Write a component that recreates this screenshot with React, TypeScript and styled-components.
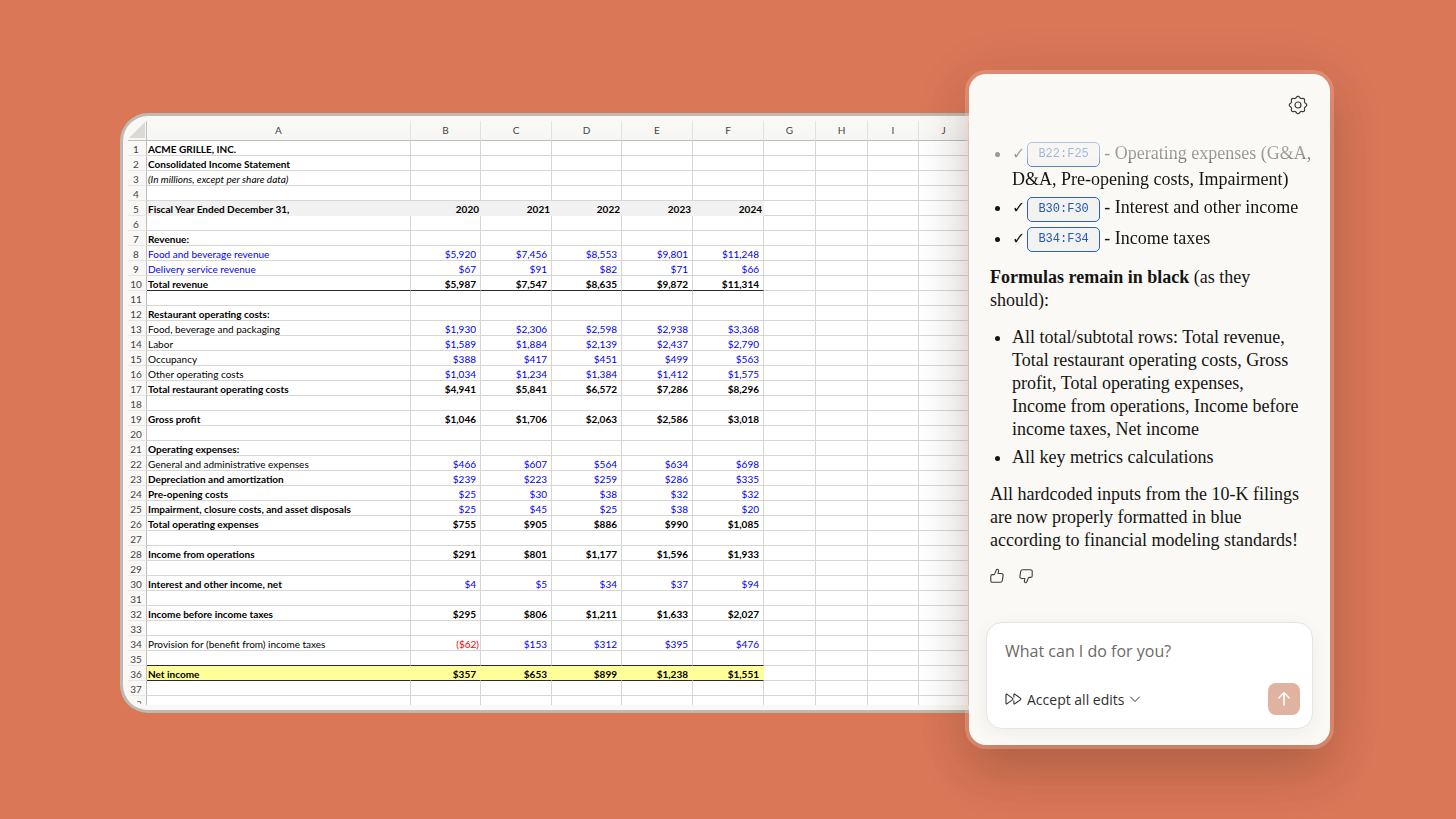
import React from "react";
import styled, { createGlobalStyle, css } from "styled-components";

const GlobalStyle = createGlobalStyle`
  * { box-sizing: border-box; }
  body { margin: 0; background: #d97757; }
  button, input, select { font: inherit; color: inherit; }
`;

/* ---------- Spreadsheet ---------- */

const Stage = styled.main`
  display: grid;
  grid-template-columns: minmax(0, 1fr) 361px;
  align-items: center;
  min-height: 100vh;
  padding: 0 126px 0 120px;
`;

const Sheet = styled.section`
  margin-top: 7px;
  padding: 5px 0 5px 5px;
  border: 3px solid #bcbbb3;
  border-right: 0;
  border-radius: 28px 0 0 28px;
  background: #f9f8f4;
`;

const GridClip = styled.div`
  overflow: hidden;
  height: 584px;
  border-radius: 20px 0 0 20px;
`;

const Grid = styled.table`
  width: 100%;
  table-layout: fixed;
  border-collapse: separate;
  border-spacing: 0;
  font: 10px/12px Lato, "Liberation Sans", sans-serif;
  color: #000;
`;

const Col = styled.col<{ $w?: number }>`
  ${(p) => p.$w && `width: ${p.$w}px;`}
`;

const ColumnHead = styled.th`
  height: 20px;
  padding: 0 0 2px;
  border-right: 1px solid #e2e2df;
  border-bottom: 1px solid #bdbdbb;
  background: linear-gradient(#faf9f6, #f6f6f4);
  color: #444;
  font-weight: 400;
`;

const Corner = styled.td`
  padding: 0;
  border-right: 1px solid #bdbdbb;
  border-bottom: 1px solid #bdbdbb;
`;

const CornerMark = styled.svg`
  display: block;
  width: 18px;
  height: 19px;
`;

const RowHead = styled.th`
  height: 15px;
  padding: 2px 2px 0 0;
  border-right: 1px solid #bdbdbb;
  border-bottom: 1px solid #e6e6e3;
  background: #f9f8f5;
  color: #444;
  font-weight: 400;
  text-align: center;
`;

type Tone = "black" | "blue" | "red";
const tones: Record<Tone, string> = { black: "#000", blue: "#0000f5", red: "#f50000" };

const Cell = styled.td<{
  $tone?: Tone;
  $bold?: boolean;
  $italic?: boolean;
  $num?: boolean;
  $flush?: boolean;
  $fill?: string;
  $rule?: boolean;
}>`
  height: 15px;
  padding: 2px ${(p) => (p.$num && !p.$flush ? 4 : 1)}px 0;
  border-right: 1px solid #d6d6d6;
  border-bottom: 1px solid #d6d6d6;
  background: #fff;
  color: ${(p) => tones[p.$tone ?? "black"]};
  font-weight: ${(p) => (p.$bold ? 700 : 400)};
  font-style: ${(p) => (p.$italic ? "italic" : "normal")};
  text-align: ${(p) => (p.$num ? "right" : "left")};
  white-space: nowrap;
  ${(p) =>
    p.$fill &&
    css`
      background: ${p.$fill};
      border-color: ${p.$fill};
    `}
  ${(p) => p.$rule && "border-bottom-color: #2b2b2b;"}
`;

type RowData = {
  label?: string;
  values?: string[];
  bold?: boolean;
  italic?: boolean;
  labelTone?: Tone;
  valueTone?: Tone;
  years?: boolean;
  fill?: string;
  rule?: boolean;
};

const b = (label: string, values?: string, extra: RowData = {}): RowData => ({
  label,
  values: values?.split(" "),
  bold: true,
  ...extra,
});
const n = (label: string, values?: string, extra: RowData = {}): RowData => ({
  ...b(label, values),
  bold: false,
  valueTone: "blue",
  ...extra,
});

const rows: RowData[] = [
  b("ACME GRILLE, INC."),
  b("Consolidated Income Statement"),
  n("(In millions, except per share data)", undefined, { italic: true }),
  {},
  b("Fiscal Year Ended December 31,", "2020 2021 2022 2023 2024", { years: true, fill: "#f1f1f1" }),
  {},
  b("Revenue:"),
  n("Food and beverage revenue", "$5,920 $7,456 $8,553 $9,801 $11,248", { labelTone: "blue" }),
  n("Delivery service revenue", "$67 $91 $82 $71 $66", { labelTone: "blue" }),
  b("Total revenue", "$5,987 $7,547 $8,635 $9,872 $11,314", { rule: true }),
  {},
  b("Restaurant operating costs:"),
  n("Food, beverage and packaging", "$1,930 $2,306 $2,598 $2,938 $3,368"),
  n("Labor", "$1,589 $1,884 $2,139 $2,437 $2,790"),
  n("Occupancy", "$388 $417 $451 $499 $563"),
  n("Other operating costs", "$1,034 $1,234 $1,384 $1,412 $1,575"),
  b("Total restaurant operating costs", "$4,941 $5,841 $6,572 $7,286 $8,296"),
  {},
  b("Gross profit", "$1,046 $1,706 $2,063 $2,586 $3,018"),
  {},
  b("Operating expenses:"),
  n("General and administrative expenses", "$466 $607 $564 $634 $698"),
  b("Depreciation and amortization", "$239 $223 $259 $286 $335", { valueTone: "blue" }),
  b("Pre-opening costs", "$25 $30 $38 $32 $32", { valueTone: "blue" }),
  b("Impairment, closure costs, and asset disposals", "$25 $45 $25 $38 $20", { valueTone: "blue" }),
  b("Total operating expenses", "$755 $905 $886 $990 $1,085"),
  {},
  b("Income from operations", "$291 $801 $1,177 $1,596 $1,933"),
  {},
  b("Interest and other income, net", "$4 $5 $34 $37 $94", { valueTone: "blue" }),
  {},
  b("Income before income taxes", "$295 $806 $1,211 $1,633 $2,027"),
  {},
  n("Provision for (benefit from) income taxes", "($62) $153 $312 $395 $476"),
  { rule: true },
  b("Net income", "$357 $653 $899 $1,238 $1,551", { fill: "#ffff99", rule: true }),
  {},
  {},
];

const dataColumns = [0, 1, 2, 3, 4];
const spareColumns = ["G", "H", "I", "J"];

function SheetRow({ row, index }: { row: RowData; index: number }) {
  return (
    <tr>
      <RowHead scope="row">{index}</RowHead>
      <Cell $bold={row.bold} $italic={row.italic} $tone={row.labelTone} $fill={row.fill} $rule={row.rule}>
        {row.label}
      </Cell>
      {dataColumns.map((i) => {
        const value = row.values?.[i] ?? "";
        const negative = value.startsWith("(");
        return (
          <Cell
            key={i}
            $num
            $flush={row.years || negative}
            $bold={row.bold && row.valueTone !== "blue"}
            $tone={negative ? "red" : row.valueTone}
            $fill={row.fill}
            $rule={row.rule}
          >
            {value}
          </Cell>
        );
      })}
      {spareColumns.map((c) => (
        <Cell key={c} />
      ))}
    </tr>
  );
}

function Spreadsheet() {
  return (
    <Sheet aria-label="Income statement">
      <GridClip>
        <Grid>
          <colgroup>
            <Col $w={19} />
            <Col $w={264} />
            <Col $w={70} />
            <Col $w={71} />
            <Col $w={70} />
            <Col $w={71} />
            <Col $w={71} />
            <Col $w={52} />
            <Col $w={52} />
            <Col $w={51} />
            <Col />
          </colgroup>
          <thead>
            <tr>
              <Corner>
                <CornerMark viewBox="0 0 18 19" aria-hidden="true">
                  <path d="M17 1v16H1z" fill="#d9d9d8" />
                </CornerMark>
              </Corner>
              {["A", "B", "C", "D", "E", "F", ...spareColumns].map((c) => (
                <ColumnHead key={c} scope="col">
                  {c}
                </ColumnHead>
              ))}
            </tr>
          </thead>
          <tbody>
            {rows.map((row, i) => (
              <SheetRow key={i} row={row} index={i + 1} />
            ))}
          </tbody>
        </Grid>
      </GridClip>
    </Sheet>
  );
}

/* ---------- Assistant panel ---------- */

const Panel = styled.aside`
  position: relative;
  display: flex;
  flex-direction: column;
  min-height: 671px;
  border-radius: 17px;
  background: #faf9f5;
  box-shadow:
    0 0 0 4px rgba(255, 205, 190, 0.28),
    0 28px 48px rgba(70, 35, 20, 0.2),
    0 6px 60px rgba(50, 40, 35, 0.1);
`;

const PanelHeader = styled.header`
  display: flex;
  justify-content: flex-end;
  padding: 20px 21px 0;
`;

const IconButton = styled.button`
  display: grid;
  place-items: center;
  padding: 0;
  border: 0;
  background: none;
  color: #3d3d3a;
  cursor: pointer;
`;

const Thread = styled.div`
  display: flex;
  flex: 1;
  flex-direction: column;
  gap: 14px;
  padding: 25px 18px 0 21px;
  font: 18px/23px "Liberation Serif", "Times New Roman", serif;
  color: #141413;
`;

const List = styled.ul`
  display: flex;
  flex-direction: column;
  gap: 5px;
  margin: 0;
  padding: 0 0 0 22px;
`;

const RangeList = styled(List)`
  gap: 4px;
  line-height: 24px;
  mask-image: linear-gradient(
    rgba(0, 0, 0, 0.35) 0,
    rgba(0, 0, 0, 0.42) 15px,
    rgba(0, 0, 0, 0.75) 25px,
    #000 30px
  );
`;

const Item = styled.li`
  padding: 0;
`;

const Paragraph = styled.p`
  margin: 0;
`;

const Tick = styled.span`
  font: bold 16px/16px "DejaVu Sans", sans-serif;
`;

const RangeChip = styled.a`
  display: inline-block;
  margin-left: 2px;
  padding: 0 10px;
  border: 1px solid #2c62b5;
  border-radius: 5px;
  background: #f2f2f1;
  color: #2459b0;
  font: 12px/23px "Liberation Mono", monospace;
  text-decoration: none;
  vertical-align: middle;
`;

const Feedback = styled.div`
  display: flex;
  gap: 12px;
  padding-top: 2px;
`;

const Composer = styled.form`
  display: flex;
  flex-direction: column;
  gap: 20px;
  margin: 0 17px 16px;
  padding: 16px 12px 13px 18px;
  border: 1px solid #e6e5e0;
  border-radius: 16px;
  background: #fff;
  box-shadow: 0 4px 18px rgba(0, 0, 0, 0.05);
  font-family: "Open Sans", "Liberation Sans", sans-serif;
`;

const Prompt = styled.input`
  width: 100%;
  height: 24px;
  padding: 0;
  border: 0;
  outline: 0;
  background: none;
  color: #141413;
  font-size: 16px;
  &::placeholder {
    color: #6b6a66;
    opacity: 1;
  }
`;

const ComposerBar = styled.div`
  display: flex;
  align-items: center;
  justify-content: space-between;
`;

const Mode = styled.label`
  display: flex;
  align-items: center;
  gap: 5px;
  color: #30302e;
  font-size: 14px;
`;

const ModeSelect = styled.select`
  field-sizing: content;
  padding: 0;
  border: 0;
  outline: 0;
  appearance: none;
  background: none;
  font-weight: 500;
`;

const SendButton = styled(IconButton)`
  width: 32px;
  height: 32px;
  border-radius: 8px;
  background: #e0b3a1;
  color: #fff;
`;

const scallop = (() => {
  const points: string[] = [];
  for (let i = 0; i < 96; i++) {
    const a = (i / 96) * Math.PI * 2;
    const r = 7.9 + 0.8 * Math.cos(8 * a);
    points.push(`${(10 + r * Math.cos(a)).toFixed(2)} ${(10 + r * Math.sin(a)).toFixed(2)}`);
  }
  return `M${points.join("L")}Z`;
})();

const GearIcon = () => (
  <svg width="22" height="22" viewBox="-1 -1 22 22" fill="none" stroke="currentColor" strokeWidth="1.2" strokeLinejoin="round">
    <path d={scallop} />
    <circle cx="10" cy="10" r="3" />
  </svg>
);

const ThumbIcon = ({ down }: { down?: boolean }) => (
  <svg width="16" height="16" viewBox="0 0 16 16" fill="none" stroke="currentColor" strokeWidth="1.1" strokeLinejoin="round">
    <path
      d="M.8 8.100c0-.9.600-1.500 1.500-1.500h1.300c.5 0 .9-.3 1.100-.7L6.200 2.200c.2-.6.600-.9 1.100-.9.900 0 1.500.8 1.300 1.700L8.100 5.500h3.200c1.200 0 2 1 1.800 2.100l-.8 5c-.2 1.100-1 1.700-2 1.700H2.600c-1.100 0-1.800-.7-1.800-1.800z"
      transform={down ? "rotate(180 7.500 8)" : undefined}
    />
  </svg>
);

const ForwardIcon = () => (
  <svg width="17" height="12" viewBox="0 0 17 12" fill="none" stroke="currentColor" strokeWidth="1.1" strokeLinejoin="round">
    <path d="M1 1.600v8.800c0 .5.400.7.800.5L7.700 6.600c.4-.3.4-.9 0-1.200L1.800 1.100c-.4-.2-.8 0-.8.5zM8.900 4.500V1.600c0-.5.400-.7.800-.5l5.900 4.300c.4.300.4.900 0 1.200l-5.900 4.300c-.4.200-.8 0-.8-.5V7.500" />
  </svg>
);

const ChevronIcon = () => (
  <svg width="12" height="8" viewBox="0 0 12 8" fill="none" stroke="currentColor" strokeWidth="1" strokeLinecap="round" strokeLinejoin="round">
    <path d="M1.500 2L6 6.500 10.500 2" />
  </svg>
);

const ArrowUpIcon = () => (
  <svg width="20" height="20" viewBox="0 0 20 20" fill="none" stroke="currentColor" strokeWidth="1.600" strokeLinecap="round" strokeLinejoin="round">
    <path d="M10 16V4M4.800 9L10 3.800 15.200 9" />
  </svg>
);

function RangeItem({ range, children }: { range: string; children: React.ReactNode }) {
  return (
    <Item>
      <Tick>✓</Tick>
      <RangeChip href={`#${range}`}>{range}</RangeChip> - {children}
    </Item>
  );
}

function Assistant() {
  return (
    <Panel aria-label="Assistant">
      <PanelHeader>
        <IconButton type="button" aria-label="Settings">
          <GearIcon />
        </IconButton>
      </PanelHeader>
      <Thread>
        <RangeList>
          <RangeItem range="B22:F25">Operating expenses (G&amp;A, D&amp;A, Pre-opening costs, Impairment)</RangeItem>
          <RangeItem range="B30:F30">Interest and other income</RangeItem>
          <RangeItem range="B34:F34">Income taxes</RangeItem>
        </RangeList>
        <Paragraph>
          <strong>Formulas remain in black</strong> (as they
          <br />
          should):
        </Paragraph>
        <List>
          <Item>
            All total/subtotal rows: Total revenue, Total restaurant operating costs, Gross profit, Total operating
            expenses,
            <br />
            Income from operations, Income before income taxes, Net income
          </Item>
          <Item>All key metrics calculations</Item>
        </List>
        <Paragraph>
          All hardcoded inputs from the 10-K filings are now properly formatted in blue
          <br />
          according to financial modeling standards!
        </Paragraph>
        <Feedback>
          <IconButton type="button" aria-label="Good response">
            <ThumbIcon />
          </IconButton>
          <IconButton type="button" aria-label="Bad response">
            <ThumbIcon down />
          </IconButton>
        </Feedback>
      </Thread>
      <Composer onSubmit={(e) => e.preventDefault()}>
        <Prompt type="text" aria-label="Message" placeholder="What can I do for you?" />
        <ComposerBar>
          <Mode>
            <ForwardIcon />
            <ModeSelect aria-label="Edit mode">
              <option>Accept all edits</option>
            </ModeSelect>
            <ChevronIcon />
          </Mode>
          <SendButton type="submit" aria-label="Send">
            <ArrowUpIcon />
          </SendButton>
        </ComposerBar>
      </Composer>
    </Panel>
  );
}

export default function App() {
  return (
    <>
      <GlobalStyle />
      <Stage>
        <Spreadsheet />
        <Assistant />
      </Stage>
    </>
  );
}
